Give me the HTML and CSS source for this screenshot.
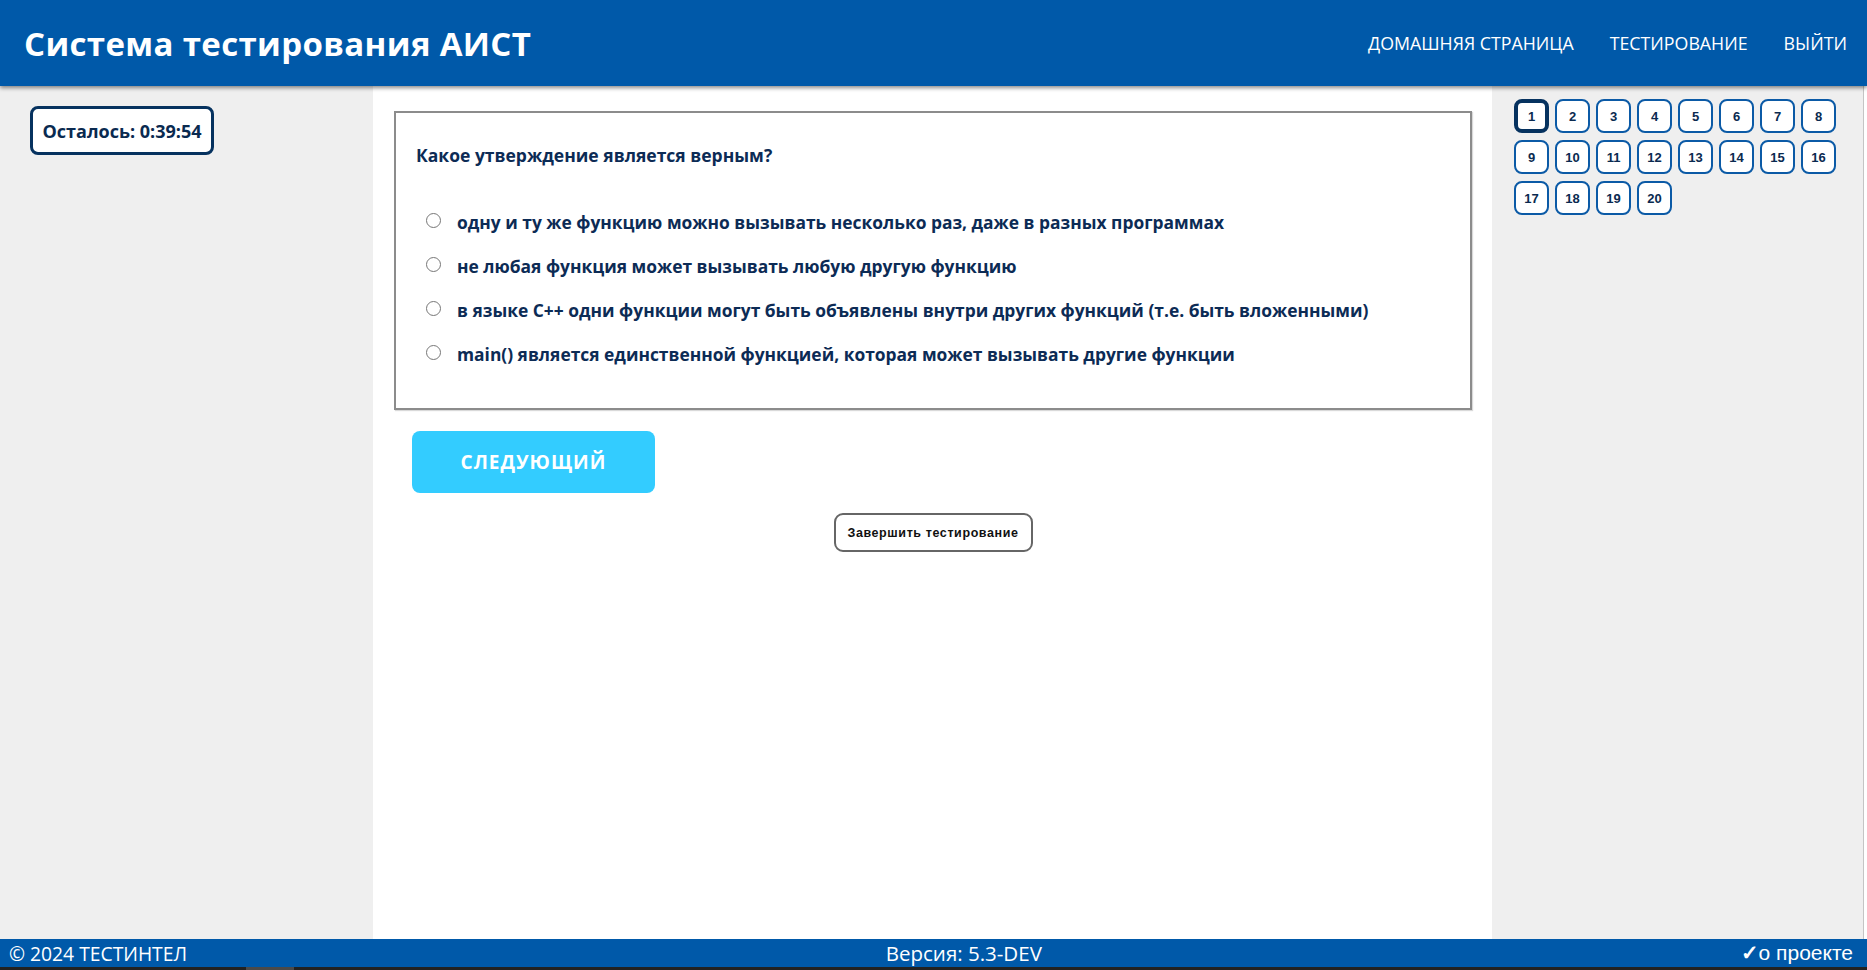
FILE: index.html
```html
<!DOCTYPE html>
<html lang="ru">
<head>
<meta charset="utf-8">
<title>Система тестирования АИСТ</title>
<link rel="stylesheet" href="styles.css">
</head>
<body>
<header class="topbar">
  <h1 class="brand">Система тестирования АИСТ</h1>
  <nav class="nav">
    <a class="nav-link" href="#">ДОМАШНЯЯ СТРАНИЦА</a>
    <a class="nav-link" href="#">ТЕСТИРОВАНИЕ</a>
    <a class="nav-link" href="#">ВЫЙТИ</a>
  </nav>
</header>
<div class="layout">
  <aside class="side side-left">
    <div class="timer">Осталось: 0:39:54</div>
  </aside>
  <main class="main">
    <div class="qcard">
      <p class="question">Какое утверждение является верным?</p>
      <ul class="options">
        <li class="option"><input class="radio" type="radio" name="a"><span class="opt-text">одну и ту же функцию можно вызывать несколько раз, даже в разных программах</span></li>
        <li class="option"><input class="radio" type="radio" name="a"><span class="opt-text">не любая функция может вызывать любую другую функцию</span></li>
        <li class="option"><input class="radio" type="radio" name="a"><span class="opt-text">в языке С++ одни функции могут быть объявлены внутри других функций (т.е. быть вложенными)</span></li>
        <li class="option"><input class="radio" type="radio" name="a"><span class="opt-text">main() является единственной функцией, которая может вызывать другие функции</span></li>
      </ul>
    </div>
    <button class="next">СЛЕДУЮЩИЙ</button>
    <div class="finish-row"><button class="finish">Завершить тестирование</button></div>
  </main>
  <aside class="side side-right">
    <div class="qnav">
      <button class="qnum active">1</button>
      <button class="qnum">2</button>
      <button class="qnum">3</button>
      <button class="qnum">4</button>
      <button class="qnum">5</button>
      <button class="qnum">6</button>
      <button class="qnum">7</button>
      <button class="qnum">8</button>
      <button class="qnum">9</button>
      <button class="qnum">10</button>
      <button class="qnum">11</button>
      <button class="qnum">12</button>
      <button class="qnum">13</button>
      <button class="qnum">14</button>
      <button class="qnum">15</button>
      <button class="qnum">16</button>
      <button class="qnum">17</button>
      <button class="qnum">18</button>
      <button class="qnum">19</button>
      <button class="qnum">20</button>
    </div>
  </aside>
</div>
<footer class="footer">
  <span class="foot-left">© 2024 ТЕСТИНТЕЛ</span>
  <span class="foot-mid">Версия: 5.3-DEV</span>
  <a class="foot-right" href="#"><span class="check">✓</span>о проекте</a>
</footer>
<div class="hscroll"><div class="hthumb"></div></div>
</body>
</html>
```
FILE: styles.css
```css
* { box-sizing: border-box; }
html, body { height: 100%; }
body {
  margin: 0;
  background: #fff;
  font-family: "Open Sans", "DejaVu Sans", sans-serif;
  display: flex;
  flex-direction: column;
  overflow: hidden;
}
.topbar {
  height: 86px;
  flex: none;
  background: #0059a9;
  display: flex;
  align-items: center;
  justify-content: space-between;
  padding: 0 20px 0 24px;
  box-shadow: 0 2px 4px rgba(0,0,0,0.45);
  position: relative;
  z-index: 2;
}
.brand {
  margin: 0;
  color: #fff;
  font-size: 33px;
  font-weight: 700;
  letter-spacing: 0.35px;
}
.nav { display: flex; gap: 36px; }
.nav-link {
  color: #fff;
  text-decoration: none;
  font-size: 17.8px;
  font-weight: 400;
}
.layout {
  flex: 1;
  display: flex;
  min-height: 0;
}
.side { background: #efefef; }
.side-left { width: 373px; flex: none; padding: 20px 0 0 30px; }
.side-right {
  flex: 1;
  padding: 13px 0 0 22px;
  margin-right: 3px;
  border-right: 1px solid #c4c4c4;
}
.timer {
  display: inline-flex;
  align-items: center;
  justify-content: center;
  width: 184px;
  height: 49px;
  border: 3px solid #06325f;
  border-radius: 8px;
  background: #fff;
  color: #0a2a50;
  font-size: 18px;
  font-weight: 700;
}
.main {
  width: 1119px;
  flex: none;
  padding: 25px 20px 0 21px;
}
.qcard {
  border: 2px solid #8c8c8c;
  padding: 30px 20px 32px 20px;
  box-shadow: 1px 1px 1px rgba(0,0,0,0.15);
}
.question {
  margin: 0;
  height: 24px;
  line-height: 24px;
  font-size: 17.5px;
  font-weight: 700;
  color: #0c2b55;
}
.options { list-style: none; margin: 33px 0 0; padding: 0; }
.option {
  height: 44px;
  display: flex;
  align-items: center;
}
.radio {
  margin: 0 0 0 10px;
  width: 15px;
  height: 15px;
  flex: none;
  position: relative;
  top: -2px;
}
.opt-text {
  margin-left: 16px;
  font-size: 17.4px;
  font-weight: 700;
  color: #0c2b55;
}
.next {
  display: block;
  margin: 21px 0 0 18px;
  width: 243px;
  height: 62px;
  border: 0;
  border-radius: 8px;
  background: #33ccff;
  color: #fff;
  font-family: "Open Sans", sans-serif;
  font-size: 19px;
  font-weight: 700;
  letter-spacing: 1px;
}
.finish-row { display: flex; justify-content: center; margin-top: 20px; }
.finish {
  width: 199px;
  height: 39px;
  border: 2px solid #666;
  border-radius: 9px;
  background: #fff;
  color: #111;
  font-family: "Liberation Sans", Arial, sans-serif;
  font-size: 12.5px;
  font-weight: 700;
  letter-spacing: 0.6px;
}
.qnav {
  display: grid;
  grid-template-columns: repeat(8, 35px);
  grid-auto-rows: 34px;
  column-gap: 6px;
  row-gap: 7px;
}
.qnum {
  border: 2px solid #0b5aa6;
  border-radius: 8px;
  background: #fff;
  color: #0a2a50;
  font-family: "Liberation Sans", Arial, sans-serif;
  font-size: 13px;
  font-weight: 700;
  padding: 0;
}
.qnum.active { border: 4px solid #06325f; }
.footer {
  height: 28px;
  flex: none;
  background: #0059a9;
  color: #fff;
  display: flex;
  align-items: center;
  justify-content: space-between;
  padding: 0 14px 0 9px;
  font-size: 19.3px;
}
.foot-mid { font-size: 20.5px; }
.foot-right {
  color: #fff;
  text-decoration: none;
  font-family: "Liberation Sans", Arial, sans-serif;
  font-size: 21px;
}
.check { font-weight: 700; }
.hscroll {
  height: 3px;
  flex: none;
  background: #222;
  position: relative;
}
.hthumb {
  position: absolute;
  left: 246px;
  width: 48px;
  top: 0;
  bottom: 0;
  background: #4a4a4a;
}
```
